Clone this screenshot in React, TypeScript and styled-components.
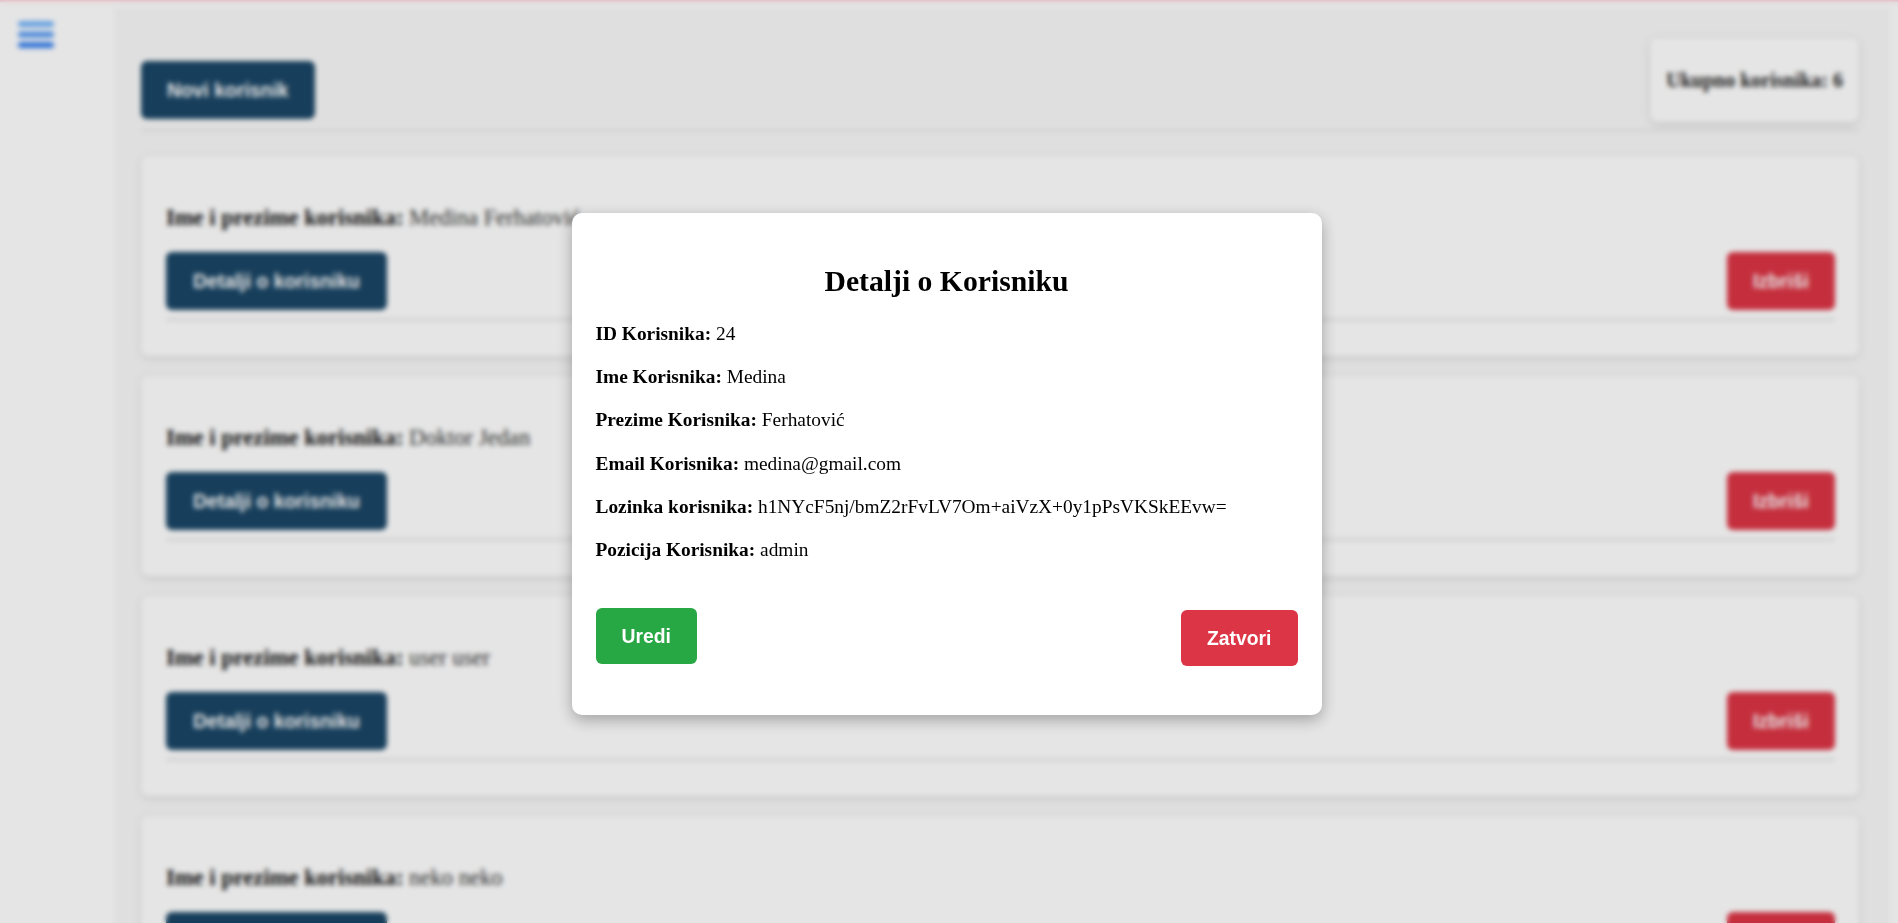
import React from "react";
import styled, { createGlobalStyle } from "styled-components";

const GlobalStyle = createGlobalStyle`
  html, body {
    margin: 0;
    padding: 0;
    height: 100%;
    overflow: hidden;
  }
  body {
    font-family: "Liberation Serif", "Times New Roman", serif;
    font-size: 19.36px;
    color: #000;
    background: #fff;
  }
`;

const Page = styled.div`
  display: flex;
  min-height: 923px;
  box-sizing: border-box;
  border-top: 2px solid #ffd3dc;
`;

const Sidebar = styled.aside`
  width: 114px;
  flex-shrink: 0;
  box-sizing: border-box;
  padding: 18px 0 0 18px;
  background: #fff;
`;

const Main = styled.main`
  flex: 1;
  margin: 6px 8px 0 0;
  padding: 0 31px 0 27px;
  background: #f9f9f9;
`;

const Header = styled.header`
  display: flex;
  justify-content: space-between;
  align-items: flex-start;
  padding: 30px 0 7px;
  border-bottom: 3px solid #ebebeb;
`;

const Counter = styled.div`
  padding: 31px 16px;
  border-radius: 8px;
  background: #fff;
  box-shadow: 0 2px 8px rgba(0, 0, 0, 0.15);
  font-size: 20px;
  font-weight: bold;
  line-height: 22px;
  color: #222;
`;

const Button = styled.button<{ $tone: "navy" | "red" | "green"; $shift?: number }>`
  margin-top: ${(p) => p.$shift ?? 0}px;
  padding: 18px 26px;
  border: none;
  border-radius: 6px;
  font-family: "Liberation Sans", Arial, sans-serif;
  font-size: 19.36px;
  font-weight: bold;
  line-height: 22px;
  color: #fff;
  cursor: pointer;
  background: ${(p) =>
    p.$tone === "navy" ? "#1a4666" : p.$tone === "red" ? "#dc3545" : "#28a745"};
`;

const CardList = styled.div`
  display: flex;
  flex-direction: column;
  gap: 20px;
  padding: 24px 0 0;
`;

const Card = styled.section`
  padding: 50px 24px 35px 25px;
  border-radius: 8px;
  background: #fff;
  box-shadow: 0 2px 8px rgba(0, 0, 0, 0.12);
`;

const CardText = styled.p`
  margin: 0 0 22px;
  font-size: 22.6px;
  line-height: 24px;
  color: #333;

  b {
    color: #111;
  }
`;

const CardActions = styled.div`
  display: flex;
  justify-content: space-between;
  padding-bottom: 8px;
  border-bottom: 3px solid #ebebeb;

  & > button:first-child {
    padding-left: 27px;
    padding-right: 27px;
  }
`;

const Overlay = styled.div`
  position: fixed;
  inset: 0;
  display: flex;
  align-items: center;
  justify-content: center;
  padding: 5px 5px 0 0;
  background: rgba(0, 0, 0, 0.1);
  backdrop-filter: blur(2.5px);
`;

const Modal = styled.div`
  width: 750px;
  box-sizing: border-box;
  padding: 51px 24px 49px;
  border-radius: 10px;
  background: #fff;
  box-shadow: 0 5px 16px rgba(0, 0, 0, 0.3);
`;

const Title = styled.h2`
  margin: 0 0 24px;
  font-size: 29.7px;
  line-height: 34.5px;
  text-align: center;
`;

const Field = styled.p`
  margin: 0 0 21px;
  line-height: 22.26px;
  &:last-of-type {
    margin-bottom: 0;
  }
`;

const ModalActions = styled.div`
  display: flex;
  justify-content: space-between;
  align-items: flex-start;
  margin-top: 46px;

  & > button {
    padding-top: 17px;
    padding-bottom: 17px;
  }
`;

const users = [
  "Medina Ferhatović",
  "Doktor Jedan",
  "user user",
  "neko neko",
];

const details: [string, string][] = [
  ["ID Korisnika:", "24"],
  ["Ime Korisnika:", "Medina"],
  ["Prezime Korisnika:", "Ferhatović"],
  ["Email Korisnika:", "medina@gmail.com"],
  ["Lozinka korisnika:", "h1NYcF5nj/bmZ2rFvLV7Om+aiVzX+0y1pPsVKSkEEvw="],
  ["Pozicija Korisnika:", "admin"],
];

const MenuIcon = () => (
  <svg width="36" height="28" viewBox="0 0 36 28">
    <defs>
      <linearGradient id="menuGrad" x1="0" y1="0" x2="0" y2="28" gradientUnits="userSpaceOnUse">
        <stop offset="0" stopColor="#7cbcfb" />
        <stop offset="1" stopColor="#2d78ee" />
      </linearGradient>
    </defs>
    <rect x="0" y="1" width="36" height="6" rx="3" fill="url(#menuGrad)" />
    <rect x="0" y="11.5" width="36" height="6" rx="3" fill="url(#menuGrad)" />
    <rect x="0" y="22" width="36" height="6" rx="3" fill="url(#menuGrad)" />
  </svg>
);

export default function App() {
  return (
    <>
      <GlobalStyle />
      <Page>
        <Sidebar>
          <MenuIcon />
        </Sidebar>
        <Main>
          <Header>
            <Button $tone="navy" $shift={23}>
              Novi korisnik
            </Button>
            <Counter>Ukupno korisnika: 6</Counter>
          </Header>
          <CardList>
            {users.map((name) => (
              <Card key={name}>
                <CardText>
                  <b>Ime i prezime korisnika:</b> {name}
                </CardText>
                <CardActions>
                  <Button $tone="navy">Detalji o korisniku</Button>
                  <Button $tone="red">Izbriši</Button>
                </CardActions>
              </Card>
            ))}
          </CardList>
        </Main>
      </Page>
      <Overlay>
        <Modal>
          <Title>Detalji o Korisniku</Title>
          {details.map(([label, value]) => (
            <Field key={label}>
              <b>{label}</b> {value}
            </Field>
          ))}
          <ModalActions>
            <Button $tone="green">Uredi</Button>
            <Button $tone="red" $shift={2}>
              Zatvori
            </Button>
          </ModalActions>
        </Modal>
      </Overlay>
    </>
  );
}
